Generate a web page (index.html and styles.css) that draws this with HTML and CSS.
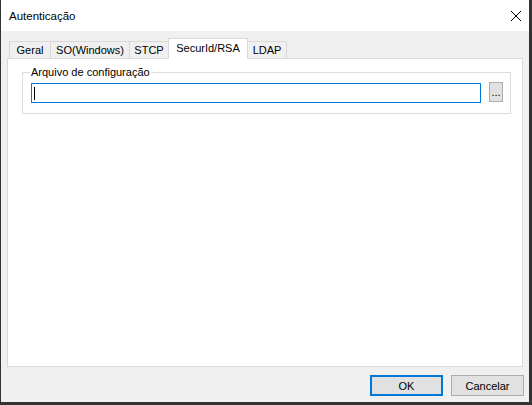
FILE: index.html
```html
<!DOCTYPE html>
<html lang="pt">
<head>
<meta charset="utf-8">
<title>Autenticação</title>
<link rel="stylesheet" href="styles.css">
</head>
<body>
<div class="window">
  <div class="titlebar">
    <span class="title">Autenticação</span>
    <svg class="close" width="10" height="10" viewBox="0 0 10 10"><path d="M0 0L10 10M10 0L0 10" stroke="#000" stroke-width="1" fill="none"/></svg>
  </div>
  <div class="client">
    <div class="tabs">
      <div class="tabstrip">
        <div class="tab w42">Geral</div>
        <div class="tab w80">SO(Windows)</div>
        <div class="tab w40">STCP</div>
        <div class="tab w80 active">SecurId/RSA</div>
        <div class="tab w40">LDAP</div>
      </div>
      <div class="panel">
        <fieldset class="group">
          <legend>Arquivo de configuração</legend>
          <div class="row">
            <div class="textbox"><span class="caret"></span></div>
            <button class="browse">...</button>
          </div>
        </fieldset>
      </div>
    </div>
    <div class="buttons">
      <button class="btn default">OK</button>
      <button class="btn">Cancelar</button>
    </div>
  </div>
</div>
</body>
</html>
```

FILE: styles.css
```css
html, body {
  margin: 0;
  padding: 0;
}
body {
  width: 532px;
  height: 405px;
  overflow: hidden;
  background: #333333;
  font-family: "Liberation Sans", Arial, sans-serif;
  font-size: 11px;
  color: #000;
}
.window {
  margin-left: 1px;
  width: 528px;
  height: 402px;
  display: flex;
  flex-direction: column;
  background: #f0f0f0;
}
.titlebar {
  height: 31px;
  flex: none;
  background: #fff;
  display: flex;
  align-items: center;
  justify-content: space-between;
  padding: 0 8px;
  box-sizing: border-box;
}
.title {
  font-size: 11.5px;
  padding-top: 1px;
}
.close {
  display: block;
}
.client {
  flex: 1;
  display: flex;
  flex-direction: column;
  padding: 7px 5px 6px 6px;
}
.tabs {
  margin-right: 1px;
  height: 329px;
  display: flex;
  flex-direction: column;
}
.tabstrip {
  height: 20px;
  flex: none;
  display: flex;
  align-items: flex-end;
  padding-left: 2px;
}
.tab {
  box-sizing: border-box;
  height: 17px;
  border: 1px solid #d9d9d9;
  border-bottom: none;
  margin-right: -1px;
  background: #f0f0f0;
  text-align: center;
  line-height: 15px;
  padding-top: 1px;
  white-space: nowrap;
}
.w40 { width: 40px; }
.w42 { width: 42px; }
.w80 { width: 80px; }
.tab.active {
  height: 21px;
  margin-bottom: -1px;
  padding-top: 2px;
  background: #fff;
  position: relative;
  z-index: 1;
}
.panel {
  flex: 1;
  background: #fff;
  border: 1px solid #d9d9d9;
  padding: 6px 11px 0 14px;
}
.group {
  margin: 0;
  border: 1px solid #dcdcdc;
  padding: 3px 7px 10px 8px;
  min-width: 0;
}
.group legend {
  padding: 0 1px;
  margin-left: -1px;
  line-height: 14px;
}
.row {
  display: flex;
  align-items: flex-start;
  gap: 8px;
}
.textbox {
  flex: 1;
  box-sizing: border-box;
  height: 20px;
  margin-top: 1px;
  border: 1px solid #0078d7;
  background: #fff;
}
.caret {
  display: block;
  width: 1px;
  height: 13px;
  background: #000;
  margin: 3px 0 0 2px;
}
.browse {
  box-sizing: border-box;
  width: 14px;
  height: 20px;
  padding: 0;
  border: 1px solid #adadad;
  background: #e1e1e1;
  font: inherit;
  line-height: 18px;
  color: #000;
}
.buttons {
  display: flex;
  justify-content: flex-end;
  gap: 8px;
  margin-top: 8px;
}
.btn {
  box-sizing: border-box;
  width: 73px;
  height: 21px;
  padding: 0;
  background: #e1e1e1;
  border: 1px solid #adadad;
  font: inherit;
  color: #000;
}
.btn.default {
  border: 2px solid #0078d7;
}
```
